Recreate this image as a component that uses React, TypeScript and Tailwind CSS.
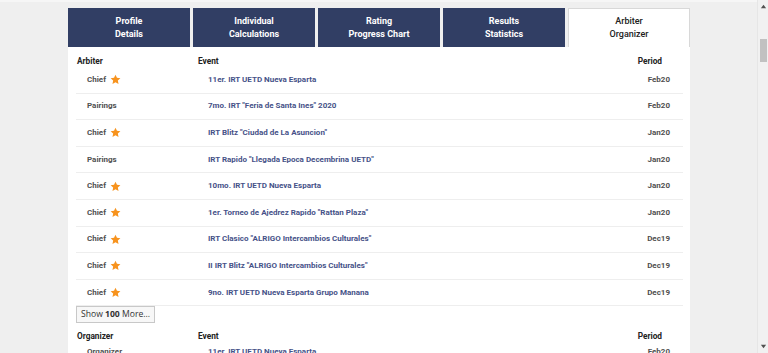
import React from 'react'

const TABS = [
  ['Profile', 'Details'],
  ['Individual', 'Calculations'],
  ['Rating', 'Progress Chart'],
  ['Results', 'Statistics'],
  ['Arbiter', 'Organizer'],
]

const ARBITER_ROWS = [
  { role: 'Chief', event: '11er. IRT UETD Nueva Esparta', period: 'Feb20' },
  { role: 'Pairings', event: '7mo. IRT "Feria de Santa Ines" 2020', period: 'Feb20' },
  { role: 'Chief', event: 'IRT Blitz "Ciudad de La Asuncion"', period: 'Jan20' },
  { role: 'Pairings', event: 'IRT Rapido "Llegada Epoca Decembrina UETD"', period: 'Jan20' },
  { role: 'Chief', event: '10mo. IRT UETD Nueva Esparta', period: 'Jan20' },
  { role: 'Chief', event: '1er. Torneo de Ajedrez Rapido "Rattan Plaza"', period: 'Jan20' },
  { role: 'Chief', event: 'IRT Clasico "ALRIGO Intercambios Culturales"', period: 'Dec19' },
  { role: 'Chief', event: 'II IRT Blitz "ALRIGO Intercambios Culturales"', period: 'Dec19' },
  { role: 'Chief', event: '9no. IRT UETD Nueva Esparta Grupo Manana', period: 'Dec19' },
]

const Star = () => (
  <svg width="11" height="11" viewBox="0 0 24 24" className="ml-[4px]">
    <path
      d="M12 1.5l3.2 6.9 7.5.9-5.6 5.1 1.5 7.4L12 18.1l-6.6 3.7 1.5-7.4-5.6-5.1 7.5-.9z"
      fill="#f7931e"
    />
  </svg>
)

const HeaderRow = ({ label }: { label: string }) => (
  <div className="grid grid-cols-[121px_1fr_auto] pl-[1px] pr-[21px] h-[12px] items-center text-[8.3px] font-bold text-[#222]">
    <span>{label}</span>
    <span>Event</span>
    <span>Period</span>
  </div>
)

export default function App() {
  return (
    <div
      className="flex h-[353px] w-[768px] overflow-hidden bg-[#efefef]"
      style={{ fontFamily: 'Roboto, "Liberation Sans", sans-serif' }}
    >
      <div className="flex-1 border-t-2 border-[#f6f6f6] pl-[68px] pt-[6px]">
        <div className="w-[622px]">
          {/* Tabs */}
          <div className="grid grid-cols-5 gap-[3px]">
            {TABS.map((t, i) => {
              const active = i === TABS.length - 1
              return (
                <div
                  key={t[0]}
                  className={
                    active
                      ? 'h-[39px] flex flex-col items-center justify-center bg-white border border-b-0 border-[#d8d8d8] text-[#222] text-[9px] leading-[13px] font-medium'
                      : 'h-[39px] flex flex-col items-center justify-center bg-[#313e64] text-white text-[9px] leading-[13px] font-bold'
                  }
                >
                  <span>{t[0]}</span>
                  <span>{t[1]}</span>
                </div>
              )
            })}
          </div>

          {/* Panel */}
          <div className="bg-white pl-[8px] pr-[7px] pt-[8px] h-[400px]">
            <HeaderRow label="Arbiter" />
            {ARBITER_ROWS.map((r, i) => (
              <div
                key={i}
                className="grid grid-cols-[121px_1fr_auto] pl-[11px] pr-[13px] h-[26.6px] items-center border-b border-[#eeeeee] text-[8px] font-bold"
              >
                <span className="flex items-center text-[#505050]">
                  {r.role}
                  {r.role === 'Chief' && <Star />}
                </span>
                <span className="text-[#465288]">{r.event}</span>
                <span className="text-[#505050]">{r.period}</span>
              </div>
            ))}
            <button
              className="block h-[17px] px-[4px] border border-[#c8c8c8] bg-[#f7f7f7] text-[8.6px] text-[#333] leading-[15px]"
              style={{ fontFamily: '"Open Sans", "Liberation Sans", sans-serif' }}
            >
              Show <b>100</b> More...
            </button>
            <div className="mt-[7px]">
              <HeaderRow label="Organizer" />
            </div>
            <div className="grid grid-cols-[121px_1fr_auto] pl-[11px] pr-[13px] h-[20px] items-center text-[8px] font-bold">
              <span className="text-[#505050]">Organizer</span>
              <span className="text-[#465288]">11er. IRT UETD Nueva Esparta</span>
              <span className="text-[#505050]">Feb20</span>
            </div>
          </div>
        </div>
      </div>

      {/* Scrollbar */}
      <div className="w-[11px] flex flex-col items-center bg-[#f1f1f1] border-l border-[#e6e6e6]">
        <svg width="7" height="7" viewBox="0 0 8 8" className="mt-[3px]">
          <path d="M4 2L7 6H1z" fill="#505050" />
        </svg>
        <div className="mt-[29px] w-[7px] h-[23px] bg-[#c1c1c1]" />
        <div className="flex-1" />
        <svg width="7" height="7" viewBox="0 0 8 8" className="mb-[3px]">
          <path d="M4 6L7 2H1z" fill="#505050" />
        </svg>
      </div>
    </div>
  )
}
